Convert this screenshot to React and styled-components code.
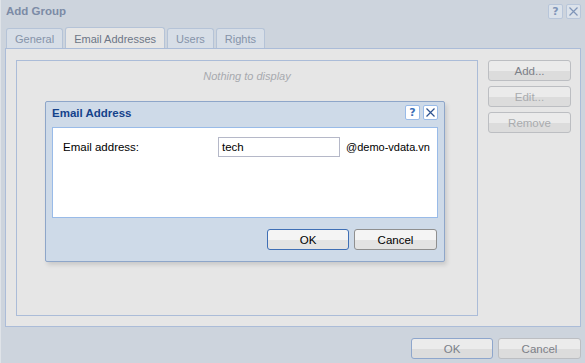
import React from "react";
import styled, { createGlobalStyle, css } from "styled-components";

const Global = createGlobalStyle`
  html, body { margin: 0; padding: 0; }
  body { width: 585px; height: 363px; overflow: hidden; font-family: "Liberation Sans", Arial, sans-serif; }
  #root { width: 585px; height: 363px; }
`;

const Window = styled.div`
  position: relative;
  width: 585px;
  height: 363px;
  box-sizing: border-box;
  background: #cdd4dd;
  border-left: 1px solid #dfe3e8;
  display: flex;
  flex-direction: column;
  font-family: "Liberation Sans", Arial, sans-serif;
  font-size: 11px;
`;

const Header = styled.div`
  height: 22px;
  display: flex;
  align-items: center;
  justify-content: space-between;
  padding: 0 4px 2px 5px;
`;

const Title = styled.div`
  font-weight: bold;
  font-size: 11.5px;
  color: ${(p) => p.$color || "#7c8ba6"};
`;

const Tools = styled.div`
  display: flex;
  gap: 3px;
`;

const Tool = styled.div`
  width: 13px;
  height: 13px;
  border: 1px solid ${(p) => p.$border || "#b8c6da"};
  border-radius: 2px;
  background: ${(p) => p.$bg || "#dbe2ea"};
  display: flex;
  align-items: center;
  justify-content: center;
  font-weight: bold;
  font-size: 11px;
  color: ${(p) => p.$color || "#7f95b8"};
  font-family: "DejaVu Sans", sans-serif;
`;

const TabStrip = styled.div`
  height: 24px;
  display: flex;
  align-items: flex-end;
  gap: 2px;
  padding: 0 0 0 5px;
`;

const Tab = styled.div`
  height: 20px;
  box-sizing: border-box;
  padding: 0 8px;
  display: flex;
  align-items: center;
  border: 1px solid #b5c3d7;
  border-bottom: none;
  border-radius: 3px 3px 0 0;
  background: #d7dee7;
  color: #8593a9;
  font-size: 11px;
  ${(p) =>
    p.$active &&
    css`
      height: 22px;
      background: #e6e6e6;
      color: #6d7686;
      margin-bottom: -1px;
    `}
`;

const Panel = styled.div`
  height: 279px;
  margin: 0 4px 0 4px;
  box-sizing: border-box;
  background: #e6e6e6;
  border: 1px solid #abbcd8;
  padding: 11px 9px 10px 10px;
  display: flex;
  gap: 10px;
`;

const ListBox = styled.div`
  flex: 1;
  border: 1px solid #abbcd8;
  display: flex;
  justify-content: center;
  align-items: flex-start;
  padding-top: 9px;
`;

const Empty = styled.div`
  font-style: italic;
  color: #a6a9ae;
  font-size: 11px;
`;

const ButtonCol = styled.div`
  width: 83px;
  display: flex;
  flex-direction: column;
  gap: 5px;
`;

const Button = styled.div`
  width: ${(p) => p.$w || 83}px;
  height: 21px;
  box-sizing: border-box;
  border: 1px solid ${(p) => (p.$focus ? p.$focusColor || "#8ea6cc" : p.$border || "#bcbec2")};
  border-radius: 3px;
  background: ${(p) =>
    p.$bg || "linear-gradient(#ebebeb 0%, #ebebeb 50%, #dcdcdc 51%, #dcdcdc 100%)"};
  display: flex;
  align-items: center;
  justify-content: center;
  font-size: 11.5px;
  color: ${(p) => (p.$disabled ? "#a9abae" : p.$color || "#7c8088")};
`;

const Footer = styled.div`
  flex: 1;
  display: flex;
  justify-content: flex-end;
  align-items: flex-start;
  padding: 11px 4px 0 0;
  gap: 5px;
`;

/* Modal dialog */
const Modal = styled.div`
  position: absolute;
  left: 44px;
  top: 101px;
  width: 400px;
  height: 161px;
  box-sizing: border-box;
  background: #cedae8;
  border: 1px solid #8ea6c9;
  border-radius: 2px;
  box-shadow: 2px 3px 4px rgba(0, 0, 0, 0.12);
  display: flex;
  flex-direction: column;
  padding: 0 6px 6px 6px;
`;

const ModalHeader = styled.div`
  height: 25px;
  box-sizing: border-box;
  padding-bottom: 4px;
  display: flex;
  align-items: center;
  justify-content: space-between;
`;

const ModalBody = styled.div`
  height: 91px;
  box-sizing: border-box;
  background: #ffffff;
  border: 1px solid #99bbe8;
  padding: 9px 10px;
  display: flex;
  align-items: flex-start;
`;

const Label = styled.div`
  width: 155px;
  flex-shrink: 0;
  padding-top: 4px;
  font-size: 11.5px;
  color: #000000;
`;

const Input = styled.div`
  width: 122px;
  flex-shrink: 0;
  height: 20px;
  box-sizing: border-box;
  border: 1px solid #b5b8c8;
  background: #ffffff;
  display: flex;
  align-items: center;
  padding-left: 3px;
  font-size: 11.5px;
  color: #000;
`;

const Suffix = styled.div`
  padding: 4px 0 0 6px;
  font-size: 11px;
  white-space: nowrap;
  color: #000;
`;

const ModalFooter = styled.div`
  display: flex;
  justify-content: flex-end;
  gap: 5px;
  padding: 11px 1px 0 0;
`;

const Help = ({ active }) => (
  <Tool
    $bg={active ? "#ffffff" : undefined}
    $border={active ? "#99bbe8" : undefined}
    $color={active ? "#3b6fb6" : undefined}
  >
    ?
  </Tool>
);

const Close = ({ active }) => (
  <Tool
    $bg={active ? "#ffffff" : undefined}
    $border={active ? "#99bbe8" : undefined}
  >
    <svg width="11" height="11" viewBox="0 0 11 11">
      <path
        d="M1.5 1.5 L9.5 9.5 M9.5 1.5 L1.5 9.5"
        stroke={active ? "#2e5390" : "#7f95b8"}
        strokeWidth="1.2"
        fill="none"
      />
    </svg>
  </Tool>
);

export default function App() {
  return (
    <>
      <Global />
      <Window>
        <Header>
          <Title>Add Group</Title>
          <Tools>
            <Help />
            <Close />
          </Tools>
        </Header>
        <TabStrip>
          <Tab>General</Tab>
          <Tab $active>Email Addresses</Tab>
          <Tab>Users</Tab>
          <Tab>Rights</Tab>
        </TabStrip>
        <Panel>
          <ListBox>
            <Empty>Nothing to display</Empty>
          </ListBox>
          <ButtonCol>
            <Button>Add...</Button>
            <Button $disabled>Edit...</Button>
            <Button $disabled>Remove</Button>
          </ButtonCol>
        </Panel>
        <Footer>
          <Button $w={82} $focus>OK</Button>
          <Button $w={83}>Cancel</Button>
        </Footer>

        <Modal>
          <ModalHeader>
            <Title $color="#15428b">Email Address</Title>
            <Tools>
              <Help active />
              <Close active />
            </Tools>
          </ModalHeader>
          <ModalBody>
            <Label>Email address:</Label>
            <Input>tech</Input>
            <Suffix>@demo-vdata.vn</Suffix>
          </ModalBody>
          <ModalFooter>
            <Button
              $w={82}
              $focus
              $focusColor="#3f6fb5"
              $color="#000"
              $bg="linear-gradient(#f4f4f4 0%, #f4f4f4 50%, #e3e3e3 51%, #e3e3e3 100%)"
            >
              OK
            </Button>
            <Button
              $w={83}
              $border="#8f8f8f"
              $color="#000"
              $bg="linear-gradient(#f4f4f4 0%, #f4f4f4 50%, #e3e3e3 51%, #e3e3e3 100%)"
            >
              Cancel
            </Button>
          </ModalFooter>
        </Modal>
      </Window>
    </>
  );
}
